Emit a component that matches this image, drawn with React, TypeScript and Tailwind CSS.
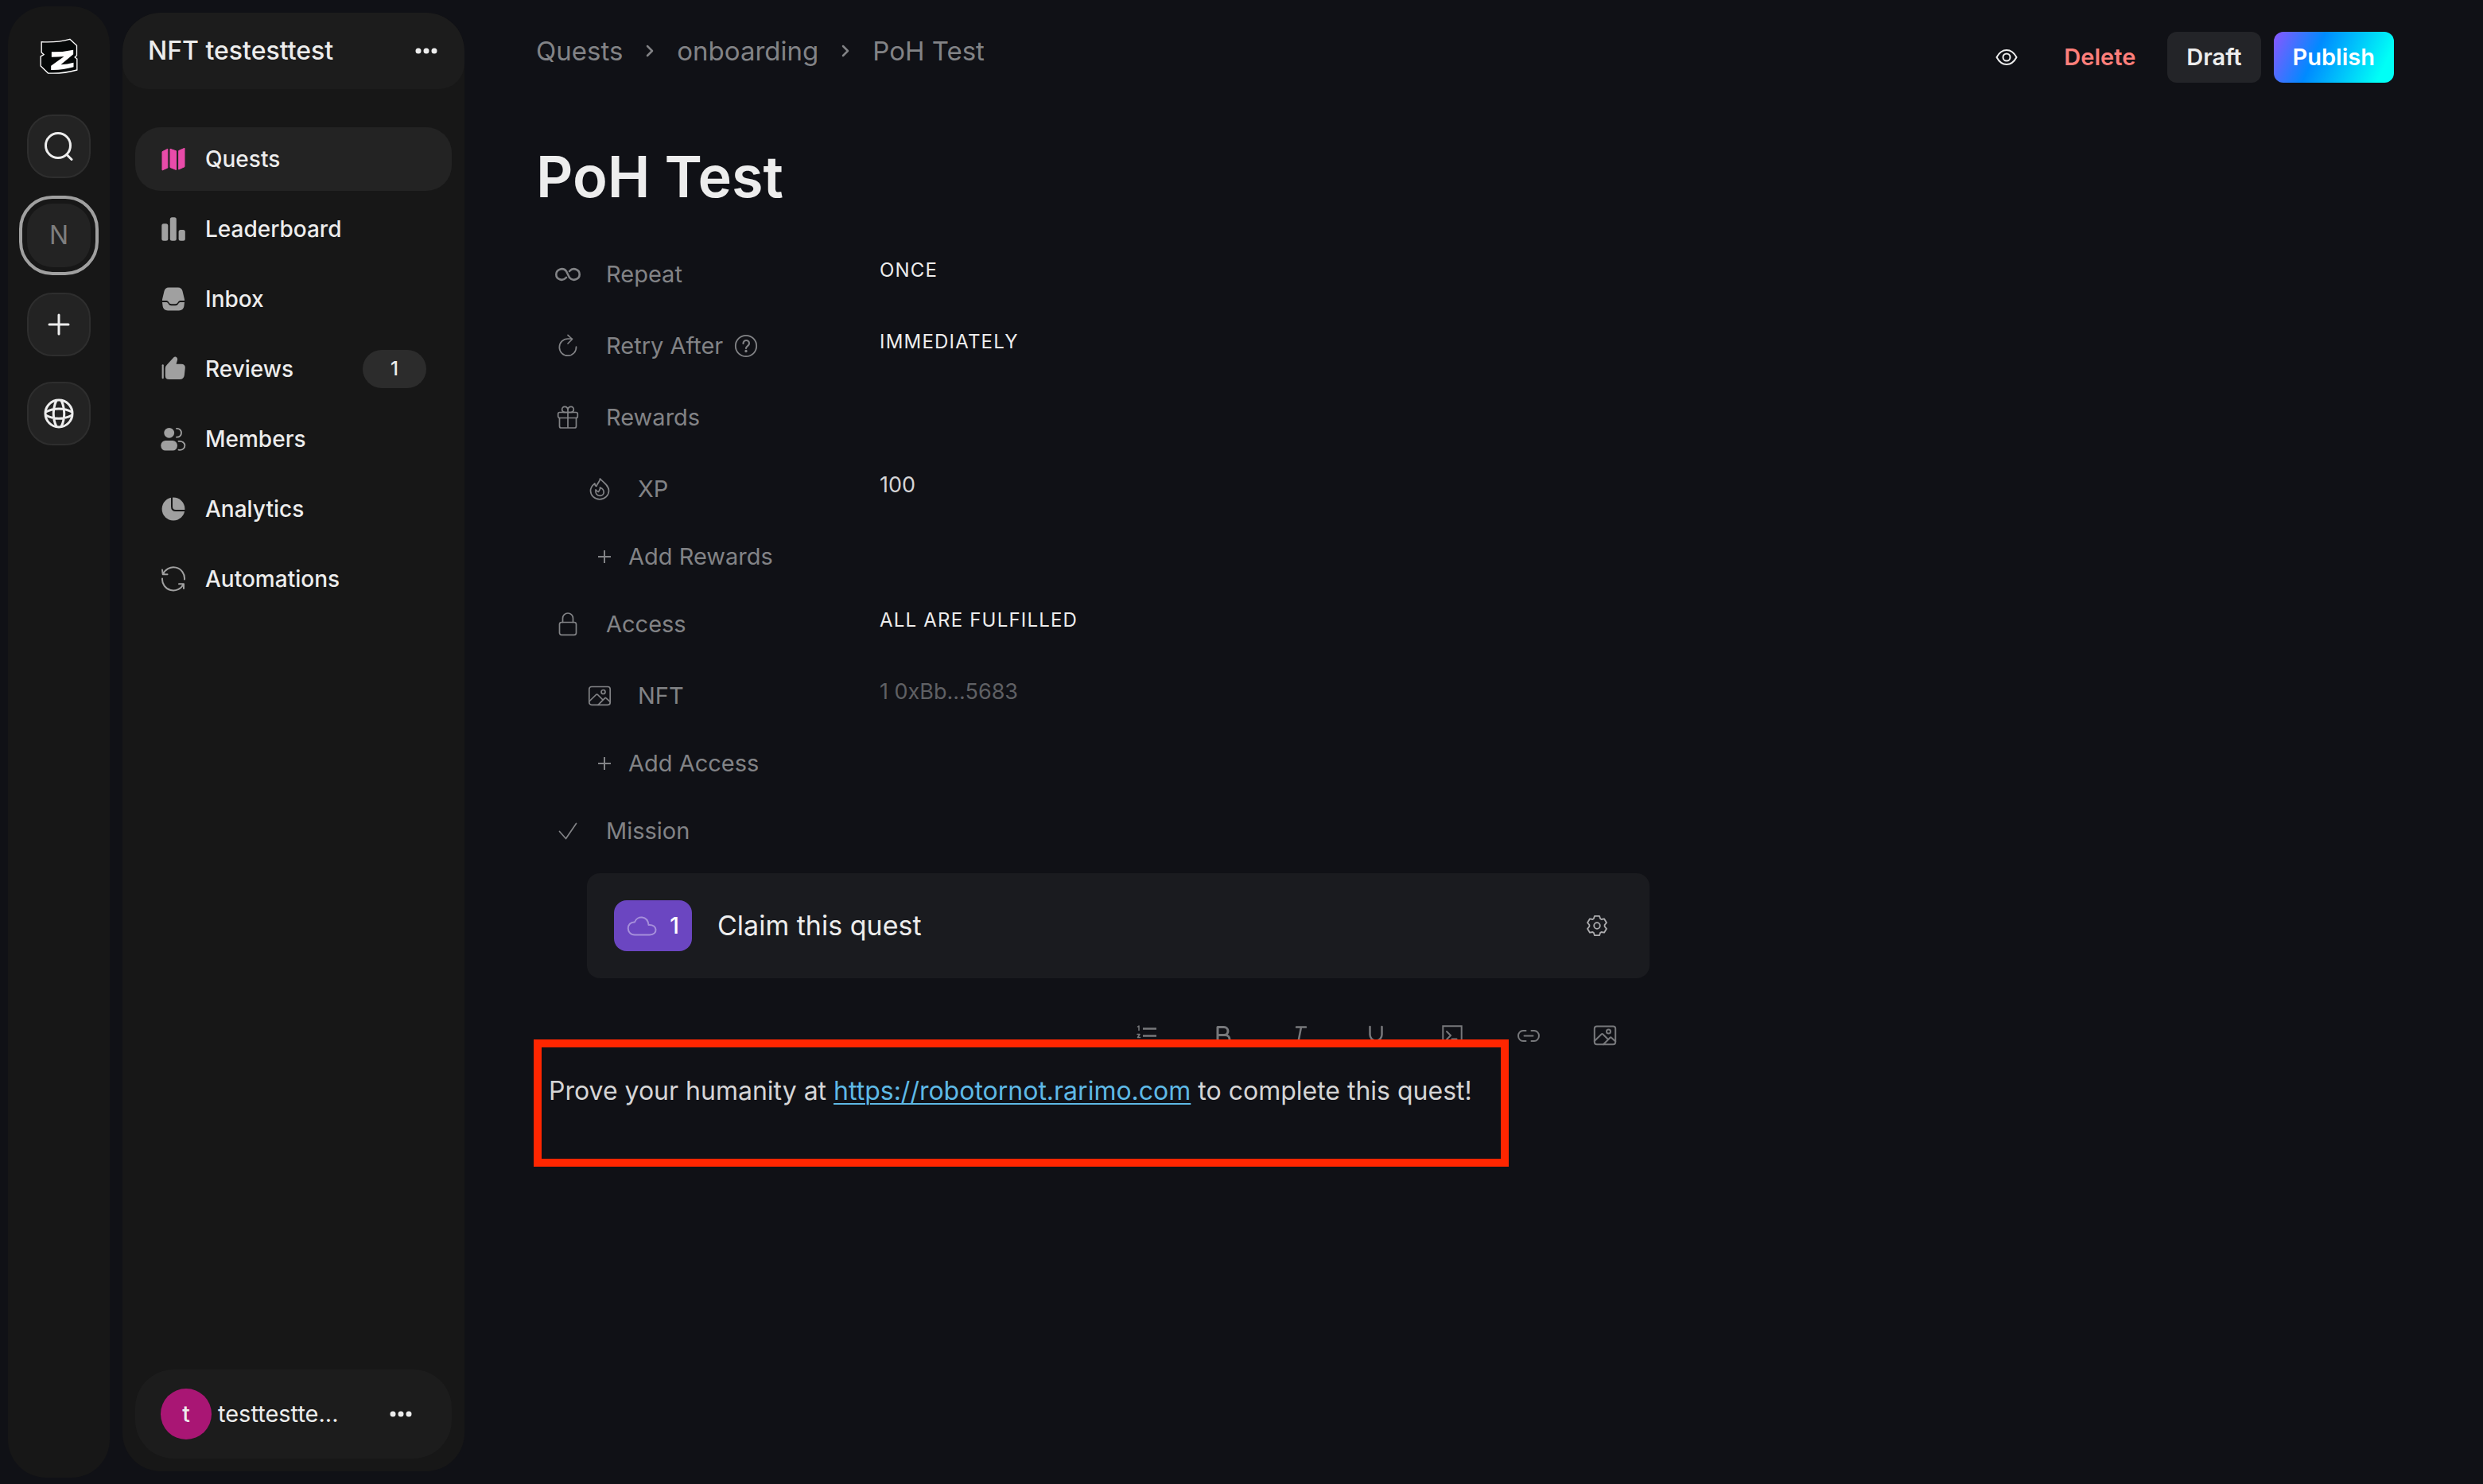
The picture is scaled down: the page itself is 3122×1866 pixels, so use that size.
import type { ReactNode } from "react";

type IconProps = { className?: string };

const stroke = {
  fill: "none",
  stroke: "currentColor",
  strokeWidth: 2,
  strokeLinecap: "round" as const,
  strokeLinejoin: "round" as const,
};

function Logo() {
  return (
    <svg viewBox="59 57 143 135" className="h-[45px] w-[48px]" aria-hidden="true">
      <path
        d="M65 71 Q125 74 172 61 L198 85 V122 L191 129 L199 135 V177 Q145 192 90 189 L62 162 V126 L74 119 L65 111Z"
        fill="#050808"
        stroke="#fff"
        strokeWidth="4"
      />
      <path
        d="M103 109 Q145 110 185 101 V118 L138 157 Q162 155 186 149 V166 Q145 178 101 177 V161 L150 126 Q128 128 103 128Z"
        fill="#fff"
      />
    </svg>
  );
}

function SearchIcon() {
  return (
    <svg viewBox="0 0 36 36" className="size-9" {...stroke} strokeWidth={3}>
      <circle cx="17" cy="17" r="15.5" />
      <path d="M28 28.5 34 34.5" />
    </svg>
  );
}

function PlusIcon({ className }: IconProps) {
  return (
    <svg viewBox="0 0 28 28" className={className} {...stroke} strokeWidth={3}>
      <path d="M14 2v24M2 14h24" />
    </svg>
  );
}

function ThinPlus() {
  return (
    <svg viewBox="0 0 20 20" className="size-5" {...stroke} strokeLinecap="butt">
      <path d="M10 2v16M2 10h16" />
    </svg>
  );
}

function GlobeIcon() {
  return (
    <svg viewBox="0 0 38 38" className="size-[38px]" {...stroke} strokeWidth={3}>
      <circle cx="19" cy="19" r="17" />
      <path d="M16 2.500c-5 10-5 23 0 33M22 2.500c5 10 5 23 0 33M2.500 17c10-5.500 23-5.500 33 0M2.500 21c10 5.500 23 5.500 33 0" />
    </svg>
  );
}

function Dots() {
  return (
    <svg viewBox="0 0 28 8" className="h-2 w-7" fill="currentColor">
      <circle cx="4" cy="4" r="3.5" />
      <circle cx="14" cy="4" r="3.5" />
      <circle cx="24" cy="4" r="3.5" />
    </svg>
  );
}

function NavSvg({ children }: { children: ReactNode }) {
  return (
    <svg viewBox="0 0 32 32" className="size-8 shrink-0" fill="currentColor" aria-hidden="true">
      {children}
    </svg>
  );
}

const MapIcon = () => (
  <NavSvg>
    <g stroke="currentColor" strokeWidth="1" strokeLinejoin="round">
      <path d="M2 6.7 8.8 3.3V27L2 30Z" />
      <path d="M12 3.3 19.5 5.8V29.5L12 26.5Z" />
      <path d="M22.7 5.5 30 2.3V25.7L22.7 29Z" />
    </g>
  </NavSvg>
);
const BarsIcon = () => (
  <NavSvg>
    <rect x="1.3" y="9.2" width="8" height="21.6" rx="2.5" />
    <rect x="11.8" y="1.2" width="8" height="29.6" rx="2.5" />
    <rect x="22.6" y="17" width="8.2" height="13.8" rx="2.5" />
  </NavSvg>
);
const InboxIcon = () => (
  <NavSvg>
    <path d="M10 1.5H22Q26.300 1.500 27.500 6L30 16.500V18H24.500C22 18 21.500 22.300 18.500 22.300H13.500C10.500 22.300 10 18 7.500 18H2V16.500L4.500 6Q5.700 1.500 10 1.500Z" />
    <path d="M2 20H7.500C9.500 20 10 24.300 13.500 24.300H18.500C22 24.300 22.500 20 24.500 20H30L29.400 25Q28.600 30.400 23 30.400H9Q3.400 30.400 2.600 25Z" />
  </NavSvg>
);
const ThumbIcon = () => (
  <NavSvg>
    <rect x="1.6" y="10.300" width="2.200" height="18" rx="1" />
    <path d="M5.800 15.500Q5.800 12.500 8 10.500L16.500 1.300Q18.500-.3 20.500 1.800Q21.600 3.200 20.800 5.500L19.600 9.800H26Q31 10 30.800 14.500L29.800 24Q29 29 24 29H10.500Q5.800 29 5.800 24.500Z" />
  </NavSvg>
);
const MembersIcon = () => (
  <NavSvg>
    <circle cx="10.700" cy="8.300" r="6.400" />
    <rect x=".3" y="18" width="20.600" height="12.600" rx="5.800" />
    <path
      d="M20 2.800C28 2.300 28 14 20 13.700M22.500 18.900C33 17.500 33 31 22.500 29.700"
      fill="none"
      stroke="currentColor"
      strokeWidth="1.800"
      strokeLinecap="round"
    />
  </NavSvg>
);
const PieIcon = () => (
  <NavSvg>
    <circle cx="16" cy="16" r="14.400" />
    <path d="M14 0V13Q14 18 19 18H32" fill="none" stroke="#171717" strokeWidth="2" />
  </NavSvg>
);
const CycleIcon = () => (
  <NavSvg>
    <g {...stroke}>
      <path d="M30 16.500A14 14 0 0 0 3 10.200M2 4.500 2.700 10.200H8.500" />
      <path d="M2 15.500A14 14 0 0 0 28.700 22.300M29 28V22.300H23" />
    </g>
  </NavSvg>
);

const nav = [
  { label: "Quests", icon: MapIcon, active: true },
  { label: "Leaderboard", icon: BarsIcon },
  { label: "Inbox", icon: InboxIcon },
  { label: "Reviews", icon: ThumbIcon, badge: 1 },
  { label: "Members", icon: MembersIcon },
  { label: "Analytics", icon: PieIcon },
  { label: "Automations", icon: CycleIcon },
];

function FieldSvg({ children }: { children: ReactNode }) {
  return (
    <svg viewBox="0 0 32 32" className="size-8 shrink-0" {...stroke} strokeWidth={1.7} aria-hidden="true">
      {children}
    </svg>
  );
}

const InfinityIcon = () => (
  <FieldSvg>
    <path
      d="M14 20C9 25.500 1.300 22 1.300 16S9.500 6.500 14 12L18 20C22.500 25.500 30.700 22 30.700 16S23 6.500 18 12"
      strokeWidth="2.600"
    />
  </FieldSvg>
);
const RetryIcon = () => (
  <FieldSvg>
    <path d="M26.500 17A10.600 10.600 0 1 1 16 7H21.500M16 2.300 21.500 7.500 16 13" />
  </FieldSvg>
);
const GiftIcon = () => (
  <FieldSvg>
    <rect x="3.700" y="9.500" width="24.600" height="7" rx="2" />
    <path d="M5.500 16.500V27Q5.500 29 7.500 29H24.500Q26.500 29 26.500 27V16.500M16 9.500V29M16 9.500H12.500C7.500 9.500 7.500 2.300 12 2.300Q16 2.300 16 7ZM16 9.500H19.500C24.500 9.500 24.500 2.300 20 2.300Q16 2.300 16 7Z" />
  </FieldSvg>
);
const FlameIcon = () => (
  <FieldSvg>
    <path d="M16.500 3C16 8 12.500 8.500 12 12.500C10.500 12 10 10.500 9.800 8.800C6 12 4.500 14.500 4.500 18A11.500 10.800 0 0 0 27.500 18C27.500 11 21 8 16.500 3Z" />
    <path d="M16.500 14C17 17 15 17.500 14.500 19.500Q13 19 11 16.800C10.500 21 12 24.300 16.300 24.300C22 24.300 23.500 17 16.500 14Z" />
  </FieldSvg>
);
const LockIcon = () => (
  <FieldSvg>
    <rect x="5.500" y="13.500" width="21" height="15.800" rx="2.500" />
    <path d="M9.500 13.500V8.500A6.500 6.500 0 0 1 22.500 8.500V13.500" />
  </FieldSvg>
);
const ImageShapes = () => (
  <>
    <rect x="2.800" y="4.500" width="26.400" height="22.800" rx="3" />
    <circle cx="20.500" cy="11" r="2.500" />
    <path d="M2.800 23 11.500 14.500Q12.500 13.600 13.500 14.500L19.500 20.500M14 27.300 22.500 18.800Q23.300 18 24.100 18.800L29.200 23.500" />
  </>
);
const ImageIcon = () => (
  <FieldSvg>
    <ImageShapes />
  </FieldSvg>
);
const CheckIcon = () => (
  <FieldSvg>
    <path d="M5.500 16.500 13.500 25.500 26.500 6.500" />
  </FieldSvg>
);

function Field({
  icon,
  label,
  value,
  valueClass = "",
  nested = false,
  help = false,
}: {
  icon: ReactNode;
  label: string;
  value?: string;
  valueClass?: string;
  nested?: boolean;
  help?: boolean;
}) {
  return (
    <div className="flex h-[90px] items-center">
      <div className={`flex w-[432px] items-center gap-8 text-[#828386] ${nested ? "pl-16" : "pl-6"}`}>
        {icon}
        <span className="flex items-center gap-[14px] text-[29px] leading-10">
          {label}
          {help && (
            <button type="button" aria-label="Help about retry">
              <svg viewBox="0 0 30 30" className="size-[30px]" {...stroke} strokeWidth={1.800}>
                <circle cx="15" cy="15" r="13.200" />
                <path d="M11.500 12C11.500 6.500 19 7 19 11.700C19 15 15 15 15 18" strokeWidth="2.200" />
                <circle cx="15" cy="21.500" r=".8" fill="currentColor" />
              </svg>
            </button>
          )}
        </span>
      </div>
      {value && (
        <button type="button" aria-label={`${label}: ${value}`} className={`pb-[10px] leading-10 ${valueClass}`}>
          {value}
        </button>
      )}
    </div>
  );
}

function AddRow({ label }: { label: string }) {
  return (
    <div className="flex h-20 items-center pl-[76px]">
      <button type="button" className="flex items-center gap-5 text-[29px] leading-10 text-[#828386]">
        <ThinPlus />
        {label}
      </button>
    </div>
  );
}

function ToolButton({ label, children }: { label: string; children: ReactNode }) {
  return (
    <button type="button" aria-label={label} className="flex h-12 w-24 items-center justify-center">
      <svg viewBox="0 0 32 32" className="size-8" {...stroke} strokeWidth={2}>
        {children}
      </svg>
    </button>
  );
}

const upper = "text-[24px] tracking-wider text-[#ededed]";
const railButton =
  "flex size-20 items-center justify-center rounded-[32px] border-2 border-[#2e2e2e] bg-[#232323] text-[#ededed]";

function Crumb({ children }: { children: ReactNode }) {
  return (
    <li className="flex items-center gap-7">
      <svg viewBox="0 0 12 16" className="h-4 w-3" {...stroke} strokeWidth={2.500}>
        <path d="M3 2 9 8 3 14" />
      </svg>
      {children}
    </li>
  );
}

export default function App() {
  return (
    <div className="flex min-h-screen bg-[#101116] font-['Inter',sans-serif] text-[#ededed]">
      <aside className="my-2 ml-[10px] flex w-32 shrink-0 flex-col items-center rounded-[48px] bg-[#171717] pt-[38px]">
        <a href="#home" aria-label="Home" className="flex h-12 items-center">
          <Logo />
        </a>
        <div className="mt-[50px] flex flex-col items-center gap-8">
          <button type="button" aria-label="Search" className={railButton}>
            <SearchIcon />
          </button>
          <button
            type="button"
            className="-m-[10px] flex size-[100px] items-center justify-center rounded-[42px] border-4 border-[#a0a0a0] p-[6px]"
          >
            <span className="flex size-20 items-center justify-center rounded-[32px] bg-[#232323] text-[32px] text-[#7e7e7e]">
              N
            </span>
          </button>
          <button type="button" aria-label="Add" className={railButton}>
            <PlusIcon className="size-7" />
          </button>
          <button type="button" aria-label="Explore" className={railButton}>
            <GlobeIcon />
          </button>
        </div>
      </aside>

      <aside className="my-4 ml-4 flex w-[430px] shrink-0 flex-col overflow-hidden rounded-[48px] bg-[#171717]">
        <header className="flex h-24 items-center justify-between rounded-[48px] rounded-b-[32px] bg-[#1c1c1c] pr-[34px] pl-8">
          <h2 className="text-[32px] leading-10 font-medium">NFT testesttest</h2>
          <button type="button" aria-label="Workspace options">
            <Dots />
          </button>
        </header>
        <nav className="mt-12 flex flex-col gap-2 px-4">
          {nav.map(({ label, icon: Icon, active, badge }) => (
            <a
              key={label}
              href={`#${label.toLowerCase()}`}
              aria-current={active ? "page" : undefined}
              className={`flex h-20 items-center gap-6 rounded-[32px] px-8 text-[28px] font-medium ${active ? "bg-[#232323]" : ""}`}
            >
              <span className={active ? "text-[#e84ba9]" : "text-[#a0a0a0]"}>
                <Icon />
              </span>
              {label}
              {badge && (
                <span className="ml-auto flex h-12 w-20 items-center justify-center rounded-3xl bg-[#2c2c2c] text-[24px]">
                  {badge}
                </span>
              )}
            </a>
          ))}
        </nav>
        <footer className="mx-4 mt-auto mb-4 flex h-28 items-center rounded-[48px] bg-[#1c1c1c] pr-[50px] pl-8">
          <span className="flex size-16 shrink-0 items-center justify-center rounded-full bg-[#a91674] text-[28px] font-medium">
            t
          </span>
          <span className="ml-2 text-[29px]">testtestte...</span>
          <button type="button" aria-label="Account options" className="ml-auto">
            <Dots />
          </button>
        </footer>
      </aside>

      <main className="min-w-0 flex-1 pt-10 pr-28 pl-[90px]">
        <header className="flex items-start justify-between">
          <nav aria-label="Breadcrumb">
            <ol className="flex h-12 items-center gap-7 text-[33px] leading-10 text-[#828386]">
              <li>
                <a href="#quests">Quests</a>
              </li>
              <Crumb>
                <a href="#onboarding">onboarding</a>
              </Crumb>
              <Crumb>
                <span aria-current="page">PoH Test</span>
              </Crumb>
            </ol>
          </nav>
          <div className="flex h-16 items-center text-[29px] font-semibold">
            <button type="button" aria-label="Preview" className="mr-[58px]">
              <svg viewBox="0 0 28 22" className="h-[22px] w-7" {...stroke}>
                <path d="M1.500 11C8 -1 20 -1 26.500 11C20 23 8 23 1.500 11Z" />
                <circle cx="14" cy="11" r="4.500" />
              </svg>
            </button>
            <button type="button" className="mr-10 text-[#ff7f7b]">
              Delete
            </button>
            <button type="button" className="mr-4 h-16 rounded-xl bg-[#232428] px-6">
              Draft
            </button>
            <button
              type="button"
              className="h-16 rounded-xl bg-[linear-gradient(115deg,#8a56ff_0%,#008aff_36%,#00fff6_88%)] px-6 text-white"
            >
              Publish
            </button>
          </div>
        </header>

        <div className="relative max-w-[1400px]">
          <h1 className="mt-[74px] text-[72px] leading-[88px] font-semibold">PoH Test</h1>

          <section className="mt-[34px]">
            <Field icon={<InfinityIcon />} label="Repeat" value="ONCE" valueClass={upper} />
            <Field icon={<RetryIcon />} label="Retry After" value="IMMEDIATELY" valueClass={upper} help />
            <Field icon={<GiftIcon />} label="Rewards" />
            <Field icon={<FlameIcon />} label="XP" value="100" valueClass="text-[27px] text-[#d5d5d6]" nested />
            <AddRow label="Add Rewards" />
            <Field icon={<LockIcon />} label="Access" value="ALL ARE FULFILLED" valueClass={upper} />
            <Field
              icon={<ImageIcon />}
              label="NFT"
              value="1 0xBb...5683"
              valueClass="text-[27px] text-[#5f6064]"
              nested
            />
            <AddRow label="Add Access" />
            <Field icon={<CheckIcon />} label="Mission" />
          </section>

          <article className="mt-2 ml-16 flex h-[132px] items-center rounded-2xl bg-[#1a1b1f] pr-[52px] pl-[34px]">
            <span className="flex h-16 w-[98px] items-center justify-center gap-4 rounded-2xl bg-[#6b46c1] text-[28px] font-medium text-white">
              <svg viewBox="0 0 38 26" className="h-[26px] w-[38px] text-[#a68fdb]" {...stroke}>
                <path d="M10 24.500C-1 24.500-1 8 10 8.500C13 0 26 0 27.500 12C39 11 39.500 24.500 29 24.500Z" />
              </svg>
              1
            </span>
            <h3 className="ml-8 text-[34px] leading-10">Claim this quest</h3>
            <button type="button" aria-label="Task settings" className="ml-auto text-[#adadaf]">
              <svg viewBox="0 0 28 28" className="size-7" {...stroke} strokeWidth={1.800}>
                <path d="M11 1.800H17L18.200 5.200 19.500 6 23 5.300 26 10.200 23.600 13V15L26 17.800 23 22.700 19.500 22 18.200 22.800 17 26.200H11L9.800 22.800 8.500 22 5 22.700 2 17.800 4.400 15V13L2 10.200 5 5.300 8.500 6 9.800 5.200Z" />
                <circle cx="14" cy="14" r="3.800" />
              </svg>
            </button>
          </article>

          <div role="toolbar" aria-label="Formatting" className="mt-12 flex justify-end pr-2 text-[#77787b]">
            <ToolButton label="Numbered list">
              <path d="M11 7.500H28M11 16.500H28M11 25.500H28" strokeLinecap="butt" strokeWidth="2.500" />
              <path d="M4.500 5 6 4V9.500M4 14.500H7L4.500 18.500H7.500M4 23H7V28H4" strokeWidth="1.500" />
            </ToolButton>
            <ToolButton label="Bold">
              <path d="M9 5.500H17A5 5 0 0 1 17 15.500H9ZM9 15.500H18.500A5.500 5.500 0 0 1 18.500 26.500H9Z" strokeWidth="3" />
            </ToolButton>
            <ToolButton label="Italic">
              <path d="M12 5.500H24M18 5.500 14 26M8 26.500H20" strokeWidth="2.500" />
            </ToolButton>
            <ToolButton label="Underline">
              <path d="M8.500 5V15A7.500 7.500 0 0 0 23.500 15V5M6 28H26" strokeWidth="2.500" />
            </ToolButton>
            <ToolButton label="Code block">
              <path d="M4.300 4.300H27.700V27.700H4.300ZM9 11 14 16 9 21M15.500 20.500H21.500" strokeLinejoin="miter" />
            </ToolButton>
            <ToolButton label="Link">
              <path d="M12.500 10H9A6 6.500 0 0 0 9 23H12.500M19.500 10H23A6 6.500 0 0 1 23 23H19.500M10.500 16.500H21.500" />
            </ToolButton>
            <ToolButton label="Image">
              <ImageShapes />
            </ToolButton>
          </div>

          <p className="mt-[22px] pl-4 text-[32px] leading-[48px] whitespace-pre-wrap text-[#d5d5d6]">
            Prove your humanity at{" "}
            <a
              href="https://robotornot.rarimo.com"
              className="text-[#5eb9e6] underline decoration-2 underline-offset-4"
            >
              https://robotornot.rarimo.com
            </a>
            {" to complete this quest!"}
          </p>
          <div className="absolute -bottom-[71px] -left-[3px] h-40 w-[1226px] border-[10px] border-[#ff2600]" />
        </div>
      </main>
    </div>
  );
}
